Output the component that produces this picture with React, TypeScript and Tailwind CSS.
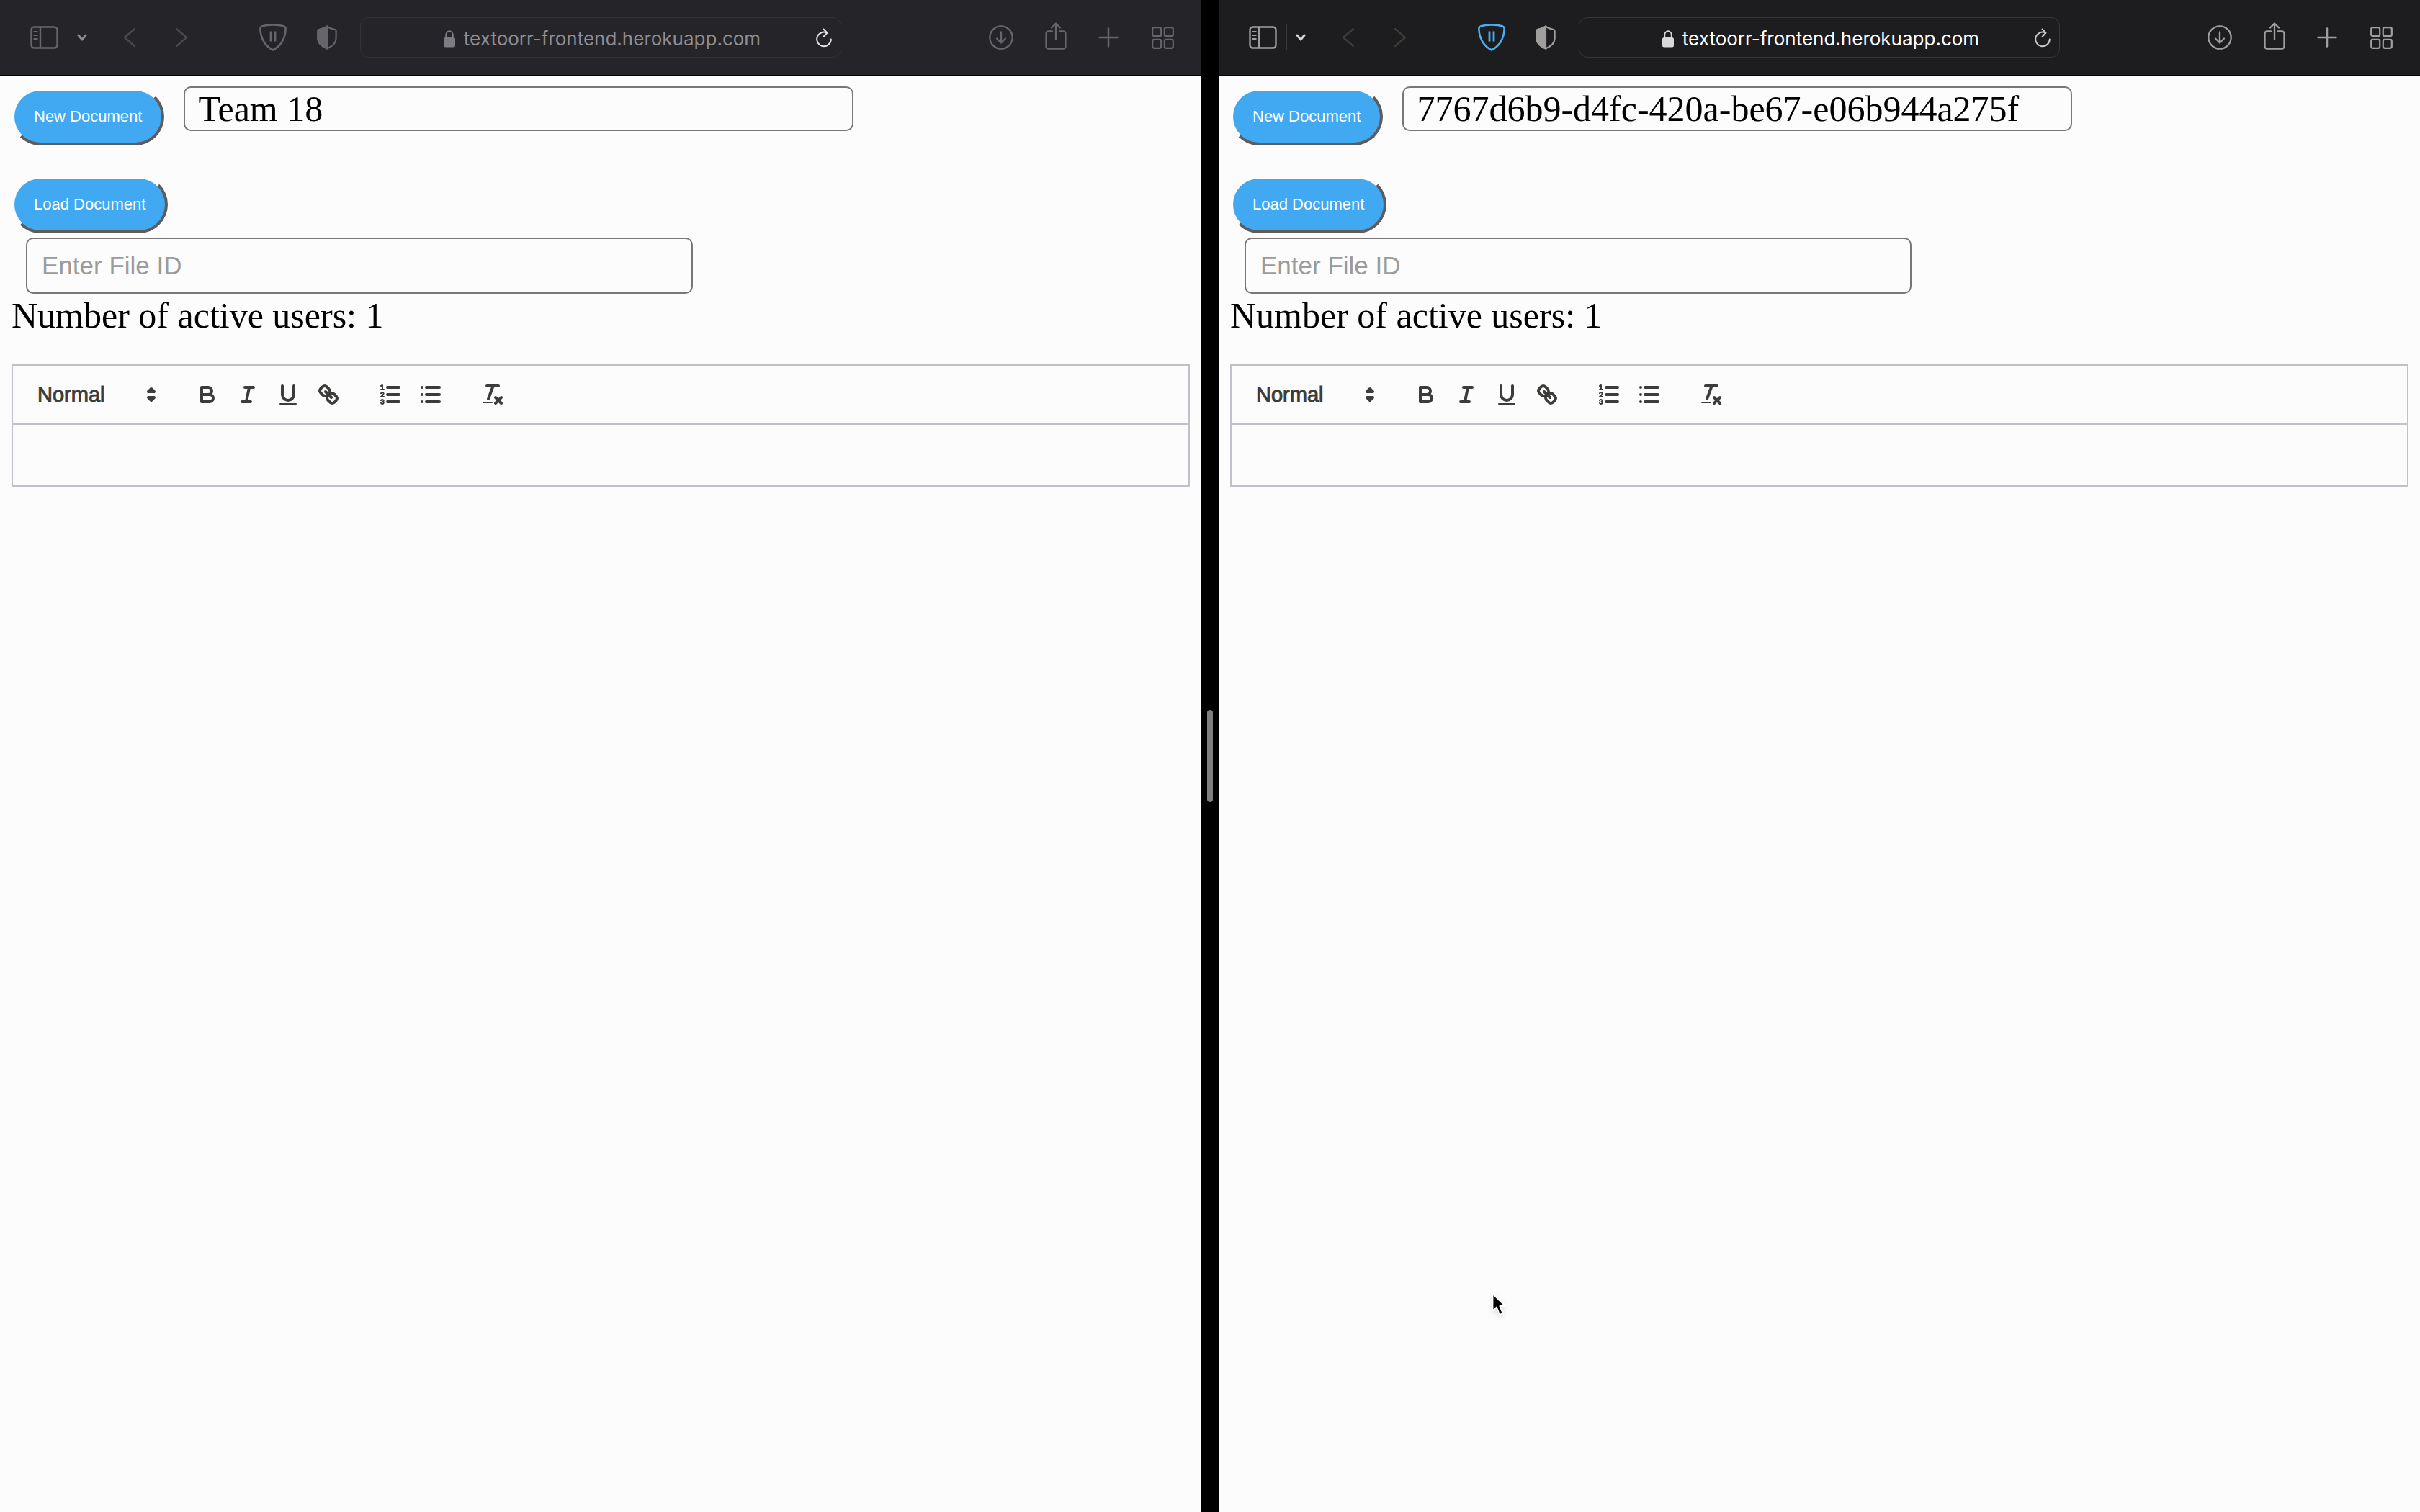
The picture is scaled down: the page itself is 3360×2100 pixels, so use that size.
import React from "react";

type IconProps = { className?: string };

function SidebarIcon({ className }: IconProps) {
  return (
    <svg className={className} width="40" height="32" viewBox="0 0 40 32" fill="none" stroke="currentColor" strokeWidth="2.4">
      <rect x="1.5" y="1.5" width="36" height="29" rx="4" />
      <path d="M14 1.5v29" />
      <path d="M4.5 8h6M4.5 13h6M4.5 18h6" strokeWidth="2" />
    </svg>
  );
}

function ShieldPauseIcon({ className }: IconProps) {
  return (
    <svg className={className} width="38" height="38" viewBox="0 0 38 38" fill="none" stroke="currentColor" strokeWidth="2.6" strokeLinejoin="round">
      <path d="M19 1.5C25 1.5 31 2.4 34.5 3.6C36 4.2 36.6 5 36.6 6.5C36.6 14 34.5 20.5 31 26C28 30.5 24 34 19 36.5C14 34 10 30.5 7 26C3.5 20.5 1.4 14 1.4 6.5C1.4 5 2 4.2 3.5 3.6C7 2.4 13 1.5 19 1.5Z" />
      <path d="M16 10.5v14M22 10.5v14" strokeWidth="2.8" />
    </svg>
  );
}

function HalfShieldIcon({ className }: IconProps) {
  return (
    <svg className={className} width="28" height="34" viewBox="0 0 28 34" fill="none" stroke="currentColor" strokeWidth="2.2" strokeLinejoin="round">
      <path d="M14 1.5C17 4 21.5 5.5 25 6C26 6.3 26.6 7 26.6 8V18.500C26.600 25 21 29.500 14 32.500C7 29.500 1.400 25 1.400 18.500V8C1.400 7 2 6.300 3 6C6.500 5.500 11 4 14 1.500Z" />
      <path d="M14 1.500V32.500C7 29.500 1.400 25 1.400 18.500V8C1.400 7 2 6.300 3 6C6.500 5.500 11 4 14 1.500Z" fill="currentColor" />
    </svg>
  );
}

function LockIcon({ className }: IconProps) {
  return (
    <svg className={className} width="16" height="24" viewBox="0 0 16 24" fill="none">
      <path d="M3.200 11V6.500C3.200 3.500 5.200 1.300 8 1.300S12.800 3.500 12.800 6.500V11" stroke="currentColor" strokeWidth="1.900" />
      <rect x="0" y="10" width="16" height="13.500" rx="2.500" fill="currentColor" />
    </svg>
  );
}

function ReloadIcon() {
  return (
    <svg width="22" height="27" viewBox="0 0 22 27" fill="none" stroke="currentColor" strokeWidth="2" strokeLinecap="round" strokeLinejoin="round">
      <path d="M15 6.500A9.800 9.800 0 1 0 20.800 15.500" />
      <path d="M10.500 1.500L15.500 6.500L10.500 12" />
    </svg>
  );
}

function DownloadIcon() {
  return (
    <svg width="34" height="34" viewBox="0 0 34 34" fill="none" stroke="currentColor" strokeWidth="2.300" strokeLinecap="round" strokeLinejoin="round">
      <circle cx="17" cy="17" r="15.700" />
      <path d="M17 9.500v15M11 18.500l6 6l6-6" />
    </svg>
  );
}

function ShareIcon() {
  return (
    <svg width="30" height="38" viewBox="0 0 30 38" fill="none" stroke="currentColor" strokeWidth="2.300" strokeLinecap="round" strokeLinejoin="round">
      <path d="M10 12.500H4.500A3 3 0 0 0 1.500 15.500V33.500A3 3 0 0 0 4.500 36.500H25.500A3 3 0 0 0 28.500 33.500V15.500A3 3 0 0 0 25.500 12.500H20" />
      <path d="M15 23.500V2M9 7.500L15 1.500L21 7.500" />
    </svg>
  );
}

function PlusIcon() {
  return (
    <svg width="28" height="28" viewBox="0 0 28 28" fill="none" stroke="currentColor" strokeWidth="2.500" strokeLinecap="round">
      <path d="M14 1.500v25M1.500 14h25" />
    </svg>
  );
}

function GridIcon() {
  return (
    <svg width="31" height="31" viewBox="0 0 31 31" fill="none" stroke="currentColor" strokeWidth="2.200">
      <rect x="1.200" y="1.200" width="12" height="12" rx="2.200" />
      <rect x="17.800" y="1.200" width="12" height="12" rx="2.200" />
      <rect x="1.200" y="17.800" width="12" height="12" rx="2.200" />
      <rect x="17.800" y="17.800" width="12" height="12" rx="2.200" />
    </svg>
  );
}

function Chevron({ d, w, h, sw }: { d: string; w: number; h: number; sw: number }) {
  return (
    <svg width={w} height={h} viewBox={`0 0 ${w} ${h}`} fill="none" stroke="currentColor" strokeWidth={sw} strokeLinecap="round" strokeLinejoin="round">
      <path d={d} />
    </svg>
  );
}

function BrowserBar({ active }: { active: boolean }) {
  const icon = active ? "text-[#a09f9d]" : "text-[#66656b]";
  const nav = active ? "text-[#3c3c38]" : "text-[#4a4a48]";
  return (
    <header
      className={`grid h-[106px] grid-cols-[3fr_4fr_3fr] items-center border-b-2 border-black ${
        active ? "bg-[#1d1d1f]" : "bg-[#252428]"
      }`}
    >
      <div className={`flex items-center justify-between pr-8 pl-[42px] ${icon}`}>
        <div className="flex items-center">
          <button type="button" aria-label="Show sidebar">
            <SidebarIcon />
          </button>
          <span className="ml-3 h-9 w-px bg-[#37373c]" />
          <button type="button" aria-label="Tab groups" className={`ml-3 ${active ? "text-[#d4d4d4]" : "text-[#8c8c90]"}`}>
            <Chevron d="M2 2l5 6l5-6" w={14} h={10} sw={3} />
          </button>
          <button type="button" aria-label="Back" className={`ml-[50px] ${nav}`}>
            <Chevron d="M16 2L2 14l14 12" w={18} h={28} sw={2.4} />
          </button>
          <button type="button" aria-label="Forward" className={`ml-[54px] ${nav}`}>
            <Chevron d="M2 2l14 12L2 26" w={18} h={28} sw={2.4} />
          </button>
        </div>
        <div className="flex items-center gap-[42px]">
          <button type="button" aria-label="Content blocker" className={active ? "text-[#45aef5]" : ""}>
            <ShieldPauseIcon />
          </button>
          <button type="button" aria-label="Privacy report">
            <HalfShieldIcon />
          </button>
        </div>
      </div>

      <div
        className={`grid h-14 grid-cols-[1fr_auto_1fr] items-center rounded-xl border ${
          active ? "border-[#36363a]" : "border-[#323236]"
        }`}
      >
        <span />
        <a
          href="https://textoorr-frontend.herokuapp.com"
          className={`flex items-center gap-3 pt-1 pl-1 font-['Inter','Liberation_Sans',sans-serif] text-[26px] leading-8 ${
            active ? "text-white" : "text-[#8e8d92]"
          }`}
        >
          <LockIcon className={active ? "text-[#d8d8d8]" : "text-[#7d7c82]"} />
          textoorr-frontend.herokuapp.com
        </a>
        <button
          type="button"
          aria-label="Reload"
          className={`mr-3 justify-self-end ${active ? "text-[#c9c9c9]" : "text-[#e4e4e4]"}`}
        >
          <ReloadIcon />
        </button>
      </div>

      <div className={`flex items-center justify-end gap-11 pr-[38px] ${icon}`}>
        <button type="button" aria-label="Downloads">
          <DownloadIcon />
        </button>
        <button type="button" aria-label="Share" className="pb-1">
          <ShareIcon />
        </button>
        <button type="button" aria-label="New tab" className="pr-0.5">
          <PlusIcon />
        </button>
        <button type="button" aria-label="Tab overview">
          <GridIcon />
        </button>
      </div>
    </header>
  );
}

function PillButton({ children }: { children: React.ReactNode }) {
  return (
    <button
      type="button"
      className="h-20 shrink-0 rounded-full border-4 border-t-[#fcfcfd] border-r-[#5f5a5c] border-b-[#5f5a5c] border-l-[#fcfcfd] bg-[#41a9f1] px-[27px] font-['Liberation_Sans',sans-serif] text-[22px] leading-7 text-white"
    >
      {children}
    </button>
  );
}

function ToolButton({ label, children }: { label: string; children: React.ReactNode }) {
  return (
    <button type="button" aria-label={label} className="h-12 w-14 px-2.5 py-1.5">
      <svg
        width="36"
        height="36"
        viewBox="0 0 18 18"
        fill="none"
        stroke="currentColor"
        strokeWidth="2"
        strokeLinecap="round"
        strokeLinejoin="round"
      >
        {children}
      </svg>
    </button>
  );
}

function Editor() {
  return (
    <section className="mt-10 border-2 border-[#c1c0ca]">
      <div role="toolbar" className="flex gap-[30px] border-b-2 border-[#c1c0ca] p-4 text-[#3c3c3a]">
        <div className="relative h-12 w-[196px]">
          <select
            aria-label="Text style"
            className="block h-12 w-full appearance-none bg-transparent pl-[18px] font-['Liberation_Sans',sans-serif] text-[29px] leading-[48px] font-medium [-webkit-text-stroke:1px_currentColor]"
          >
            <option>Normal</option>
          </select>
          <svg
            className="pointer-events-none absolute top-1.5 right-0.5"
            width="36"
            height="36"
            viewBox="0 0 18 18"
            fill="currentColor"
            stroke="currentColor"
            strokeWidth="2"
            strokeLinecap="round"
            strokeLinejoin="round"
          >
            <polygon points="7 11 9 13 11 11 7 11" />
            <polygon points="7 7 9 5 11 7 7 7" />
          </svg>
        </div>
        <div className="flex">
          <ToolButton label="Bold">
            <path d="M5,4H9.500A2.500,2.500,0,0,1,12,6.500v0A2.500,2.500,0,0,1,9.500,9H5V4Z" />
            <path d="M5,9h5.500A2.500,2.500,0,0,1,13,11.500v0A2.500,2.500,0,0,1,10.500,14H5V9Z" />
          </ToolButton>
          <ToolButton label="Italic">
            <path d="M7,4H13M5,14H11M8,14L10,4" />
          </ToolButton>
          <ToolButton label="Underline">
            <path d="M5,3V9a4.012,4.012,0,0,0,4,4H9a4.012,4.012,0,0,0,4-4V3" />
            <rect fill="currentColor" stroke="none" x="3" y="15" width="12" height="1" rx="0.5" />
          </ToolButton>
          <ToolButton label="Link">
            <path d="M7,7L11,11" />
            <path d="M8.900,4.577a3.476,3.476,0,0,1,.36,4.679A3.476,3.476,0,0,1,4.577,8.900C3.185,7.500,2.035,6.400,4.217,4.217S7.500,3.185,8.900,4.577Z" />
            <path d="M13.423,9.100a3.476,3.476,0,0,0-4.679-.36,3.476,3.476,0,0,0,.36,4.679c1.392,1.392,2.500,2.542,4.679.36S14.815,10.500,13.423,9.100Z" />
          </ToolButton>
        </div>
        <div className="flex">
          <ToolButton label="Numbered list">
            <path d="M7,4H15M7,9H15M7,14H15" />
            <path strokeWidth="1" d="M2.500,5.500H4.500M3.500,5.500V2.500L2.500,3" />
            <path strokeWidth="1" d="M4.500,10.500h-2c0-.234,1.850-1.076,1.850-2.234A0.959,0.959,0,0,0,2.500,8.156" />
            <path strokeWidth="1" d="M2.500,14.846a0.959,0.959,0,0,0,1.850-.109A0.700,0.700,0,0,0,3.750,14a0.688,0.688,0,0,0,.6-0.736,0.959,0.959,0,0,0-1.850-.109" />
          </ToolButton>
          <ToolButton label="Bulleted list">
            <path d="M6,4H15M6,9H15M6,14H15M3,4H3M3,9H3M3,14H3" />
          </ToolButton>
        </div>
        <div className="flex">
          <ToolButton label="Clear formatting">
            <path d="M5,3H13M6,12L9.350,3M11,11L15,15M15,11L11,15" />
            <rect fill="currentColor" stroke="none" x="2" y="14" width="7" height="1" rx="0.5" />
          </ToolButton>
        </div>
      </div>
      <textarea
        aria-label="Document text"
        rows={1}
        className="block h-[84px] w-full resize-none px-[30px] py-6 font-['Liberation_Sans',sans-serif] text-[26px] leading-9 outline-none"
      />
    </section>
  );
}

function BrowserWindow({ active, title }: { active: boolean; title: string }) {
  return (
    <div className="min-w-0 flex-1 bg-[#fcfcfd]">
      <BrowserBar active={active} />
      <main className="px-4 pt-3.5 font-['Liberation_Serif',serif] text-[50px] leading-[56px] text-black">
        <div className="flex items-start gap-[27px]">
          <div className="flex pt-0.5">
            <PillButton>New Document</PillButton>
          </div>
          <input
            aria-label="Document title"
            defaultValue={title}
            className="h-[62px] w-full max-w-[930px] rounded-[10px] border-2 border-[#77767b] px-[18px] outline-none"
          />
        </div>
        <div className="mt-[42px] flex">
          <PillButton>Load Document</PillButton>
        </div>
        <input
          aria-label="File ID"
          placeholder="Enter File ID"
          className="mt-1.5 ml-5 block h-[78px] w-full max-w-[926px] rounded-[10px] border-2 border-[#77767b] px-5 font-['Liberation_Sans',sans-serif] text-[35px] leading-10 outline-none placeholder:text-[#9b9b9b]"
        />
        <p className="mt-0.5">Number of active users: 1</p>
        <Editor />
      </main>
    </div>
  );
}

export default function App() {
  return (
    <div className="relative flex min-h-screen bg-black">
      <BrowserWindow active={false} title="Team 18" />
      <div role="separator" className="flex w-6 shrink-0 items-center justify-center bg-black">
        <span className="h-32 w-2 rounded-full bg-[#7f7f82]" />
      </div>
      <BrowserWindow active title="7767d6b9-d4fc-420a-be67-e06b944a275f" />
      <svg
        className="pointer-events-none absolute top-[1795px] left-[2070px] drop-shadow-md"
        width="24"
        height="36"
        viewBox="0 0 24 36"
        aria-hidden="true"
      >
        <path
          d="M2.500 2V25.500L8 20.500L12 31L16.500 29L12.300 19H20Z"
          fill="#000"
          stroke="#fff"
          strokeWidth="1.800"
          strokeLinejoin="round"
        />
      </svg>
    </div>
  );
}
